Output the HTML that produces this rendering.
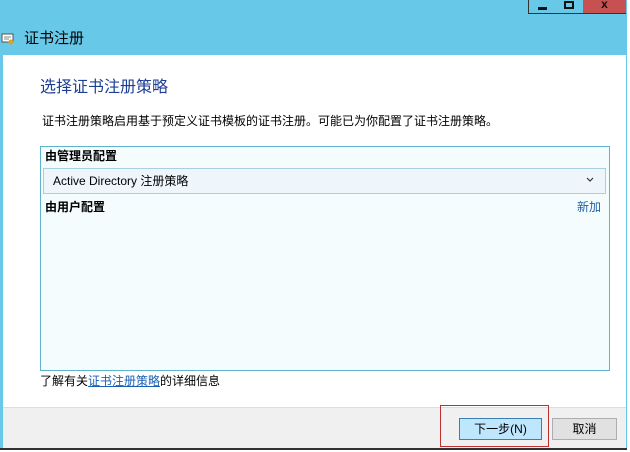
<!DOCTYPE html><html><head><meta charset="utf-8"><style>
*{margin:0;padding:0;box-sizing:border-box}
body{width:630px;height:452px;background:#fff;position:relative;overflow:hidden;font-family:"Liberation Sans","Microsoft YaHei","Noto Sans CJK SC",sans-serif;font-size:12px;color:#000}
.a{position:absolute}
</style></head><body>
<div class="a" style="left:0;top:0;width:627px;height:449px;background:#68c8e8"></div>
<div class="a" style="left:528px;top:0;width:28px;height:14px;border:1px solid #333;border-top:none;background:#68c8e8"><div class="a" style="left:9px;top:7px;width:9px;height:3px;background:#111"></div></div>
<div class="a" style="left:555px;top:0;width:29px;height:14px;border:1px solid #333;border-top:none;border-left:none;background:#68c8e8"><div class="a" style="left:9px;top:1px;width:10px;height:8px;border:2px solid #111"></div></div>
<div class="a" style="left:583px;top:0;width:43px;height:14px;background:#c75050;border-bottom:1px solid #333;color:#111;font-weight:bold;text-align:center;line-height:8px;font-size:12px">x</div>
<svg class="a" style="left:1px;top:32px" width="14" height="14"><rect x="1" y="2" width="11" height="8" fill="#fff" stroke="#555"/><line x1="3" y1="5" x2="10" y2="5" stroke="#888"/><line x1="3" y1="7" x2="8" y2="7" stroke="#888"/><circle cx="10" cy="10" r="2.5" fill="#e0a020"/></svg>
<div class="a" style="left:24px;top:27px;font-size:15px;color:#000">证书注册</div>
<div class="a" style="left:3px;top:55px;width:623px;height:353px;background:#fff"></div>
<div class="a" style="left:40px;top:73px;font-size:16px;color:#1c3f94">选择证书注册策略</div>
<div class="a" style="left:42px;top:112px">证书注册策略启用基于预定义证书模板的证书注册。可能已为你配置了证书注册策略。</div>
<div class="a" style="left:40px;top:146px;width:570px;height:225px;background:#f4fcfe;border:1px solid #5eb4cc"></div>
<div class="a" style="left:45px;top:147px;font-weight:bold">由管理员配置</div>
<div class="a" style="left:43px;top:168px;width:563px;height:26px;background:#eef6fc;border:1px solid #a8d0e4"></div>
<div class="a" style="left:53px;top:172px">Active Directory 注册策略</div>
<svg class="a" style="left:586px;top:177px" width="8" height="6"><path d="M1 1 L4 4 L7 1" fill="none" stroke="#333" stroke-width="1.2"/></svg>
<div class="a" style="left:45px;top:198px;font-weight:bold">由用户配置</div>
<div class="a" style="left:577px;top:198px;color:#1f5fa8">新加</div>
<div class="a" style="left:40px;top:372px">了解有关<span style="color:#1a5fb4;text-decoration:underline">证书注册策略</span>的详细信息</div>
<div class="a" style="left:3px;top:407px;width:623px;height:41px;background:#f0f0f0;border-top:1px solid #ddd"></div>
<div class="a" style="left:0;top:448px;width:627px;height:2px;background:#333"></div>
<div class="a" style="left:459px;top:418px;width:83px;height:22px;background:#bee6fd;border:1px solid #3c7fb1;text-align:center;line-height:20px">下一步(N)</div>
<div class="a" style="left:552px;top:418px;width:65px;height:22px;background:#e1e1e1;border:1px solid #adadad;text-align:center;line-height:20px">取消</div>
<div class="a" style="left:440px;top:405px;width:109px;height:42px;border:1px solid #c03030"></div>
</body></html>
